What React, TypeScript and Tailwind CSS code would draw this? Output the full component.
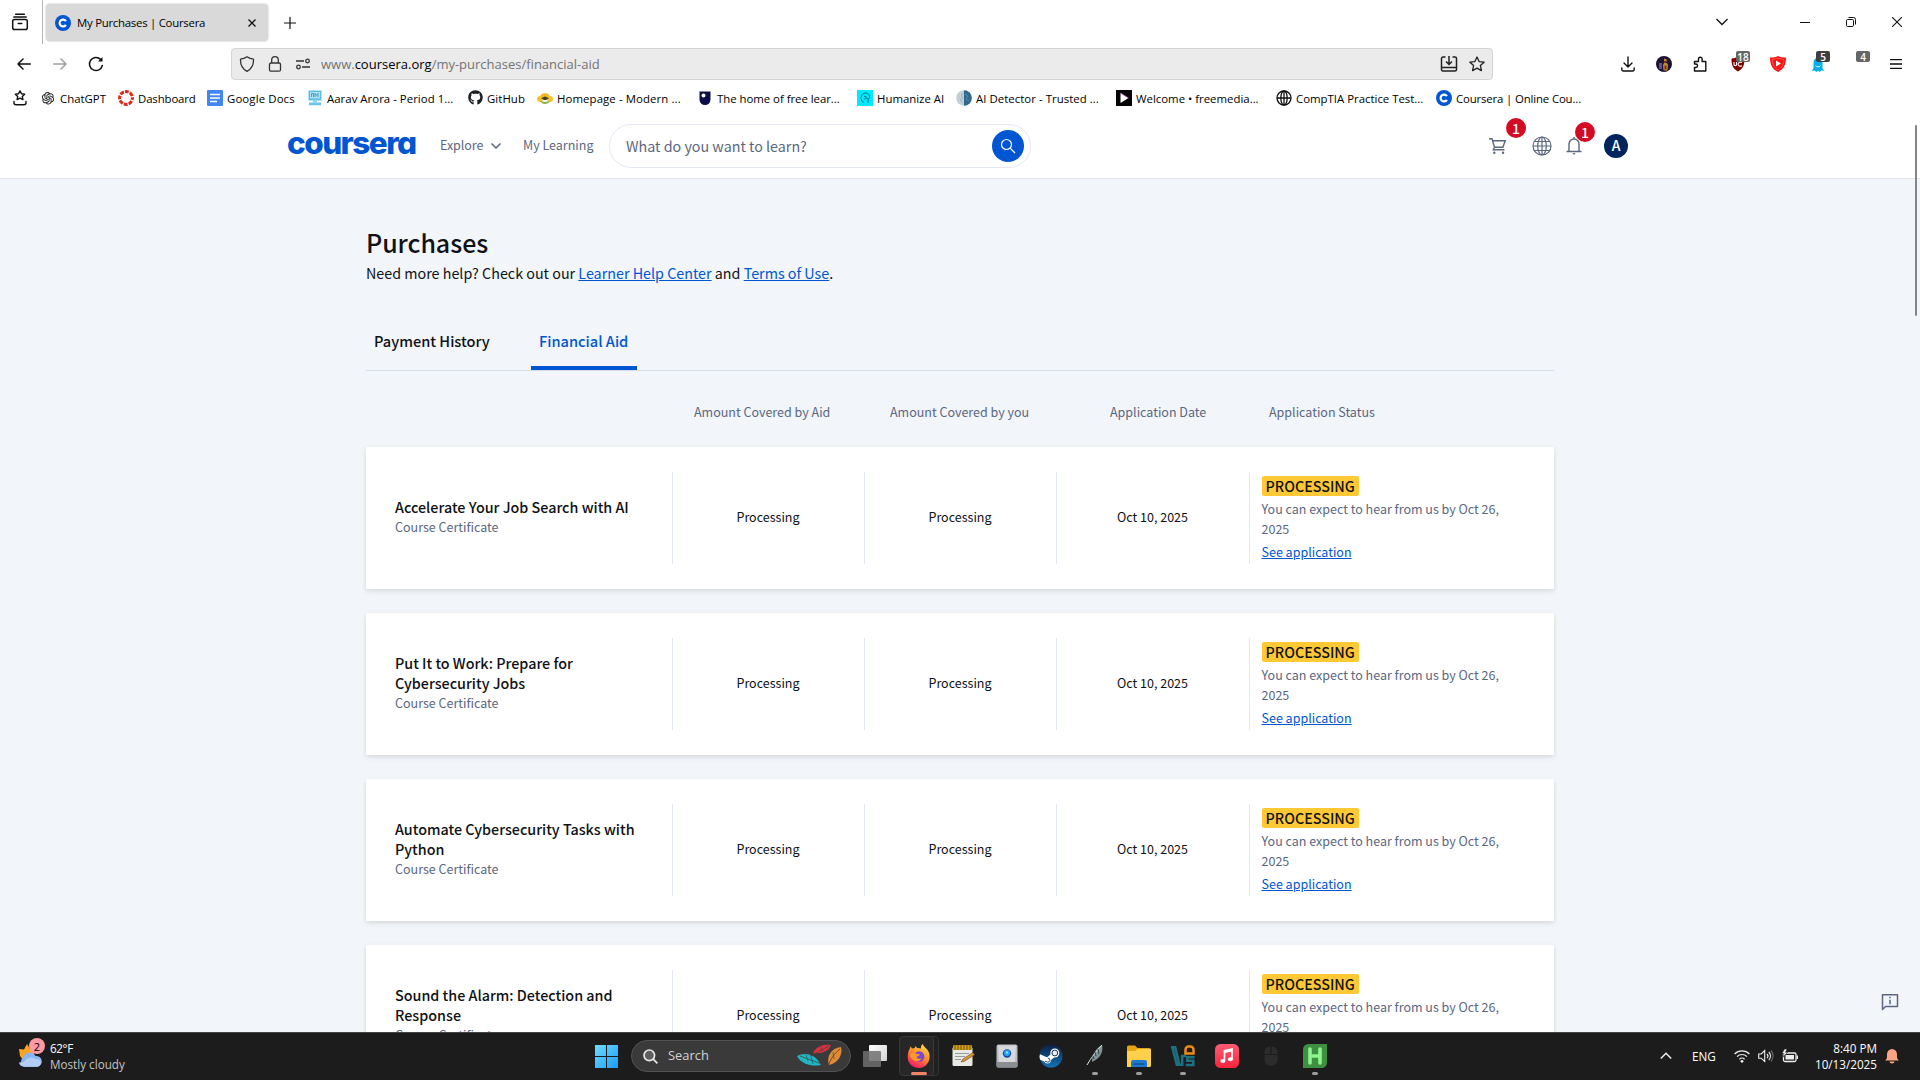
import type { ReactNode } from "react";
import { AiOutlineOpenAI } from "react-icons/ai";
import { FaGithub } from "react-icons/fa";

type IconProps = { className?: string };

const CourseraMark = ({ className = "size-4" }: IconProps) => (
  <svg viewBox="0 0 16 16" className={className}>
    <circle cx="8" cy="8" r="8" fill="#0056d2" />
    <path d="M10.9 9.8A3.4 3.4 0 1 1 10.9 6.2" fill="none" stroke="#fff" strokeWidth="2.2" />
  </svg>
);

const GlobeLine = () => (
  <svg viewBox="0 0 16 16" className="size-4" fill="none" stroke="#111" strokeWidth="1.3">
    <circle cx="8" cy="8" r="7" />
    <ellipse cx="8" cy="8" rx="3.2" ry="7" />
    <path d="M1 8h14M8 1v14" />
  </svg>
);

const bookmarks: { label: string; box: string; text: string; icon: ReactNode }[] = [
  { label: "ChatGPT", box: "w-[78px]", text: "", icon: <AiOutlineOpenAI className="size-4 text-[#222]" /> },
  {
    label: "Dashboard", box: "w-[89px]", text: "tracking-[-0.12px]",
    icon: (
      <svg viewBox="0 0 16 16" className="size-4">
        <circle cx="8" cy="8" r="6.4" fill="none" stroke="#e0291b" strokeWidth="3" strokeDasharray="3.9 1.13" strokeDashoffset="1.9" />
      </svg>
    ),
  },
  {
    label: "Google Docs", box: "w-[100px]", text: "tracking-[0.12px]",
    icon: (
      <svg viewBox="0 0 16 16" className="size-4">
        <rect width="16" height="16" rx="1" fill="#4285f4" />
        <path d="M3 4.5h10M3 8h10M3 11.5h7" stroke="#fff" strokeWidth="1.5" />
      </svg>
    ),
  },
  {
    label: "Aarav Arora - Period 1...", box: "w-[160px]", text: "tracking-[0.03px]",
    icon: (
      <svg viewBox="0 0 16 16" className="size-4">
        <rect x="1.5" y="0.5" width="13" height="10" fill="#5bbfe6" />
        <rect x="3" y="2" width="10" height="6.5" fill="#a8e0f5" />
        <path d="M4.5 7V3.5h2V7M8 7V3.5l1.5 2 1.5-2V7" stroke="#4a88aa" fill="none" strokeWidth="0.8" />
        <rect x="6" y="10.5" width="4" height="2" fill="#8fd0ec" />
        <rect x="2" y="12.5" width="12" height="2.8" fill="#6cc6ea" />
      </svg>
    ),
  },
  { label: "GitHub", box: "w-[70px]", text: "tracking-[0.06px]", icon: <FaGithub className="ml-px size-[15px] text-[#1b1f23]" /> },
  {
    label: "Homepage - Modern ...", box: "w-[160px]", text: "tracking-[0.1px]",
    icon: (
      <svg viewBox="0 0 16 16" className="size-4">
        <path d="M2 10A6 7 0 0 1 14 10z" fill="#f5b921" />
        <circle cx="3" cy="9" r="3" fill="#f2c230" />
        <circle cx="13" cy="9" r="3" fill="#f2c230" />
        <path d="M4 8.200l4-1.800 4 1.800-4 2z" fill="#3a3a35" />
        <path d="M3 11c2 4 8 4 10 0l-5 1z" fill="#8fae4a" />
      </svg>
    ),
  },
  {
    label: "The home of free lear...", box: "w-[160px]", text: "tracking-[-0.03px]",
    icon: (
      <svg viewBox="0 0 16 16" className="size-4">
        <path d="M2.5 1.5h11v8a5.5 5.5 0 0 1-11 0z" fill="#0b0f45" />
        <circle cx="6.5" cy="5.5" r="2" fill="#fff" />
      </svg>
    ),
  },
  {
    label: "Humanize AI", box: "w-[99px]", text: "",
    icon: (
      <svg viewBox="0 0 16 16" className="size-4">
        <rect width="16" height="16" fill="#00eaff" />
        <path d="M6 13v-2H4.5V8.800L3.500 8l1-1.500C4.700 4 6.500 3 8.500 3c2.500 0 4 1.800 4 3.800 0 2-1.500 2.700-1.500 4V13M7 6.500h2v2h2M7 9h1.500" fill="none" stroke="#0b6f86" strokeWidth="0.900" />
      </svg>
    ),
  },
  {
    label: "AI Detector - Trusted ...", box: "w-[160px]", text: "tracking-[0.04px]",
    icon: (
      <svg viewBox="0 0 16 16" className="size-4">
        <circle cx="8" cy="8" r="7.800" fill="#c3d0d8" />
        <path d="M8 .2a7.800 7.800 0 0 1 0 15.600z" fill="#2f6a8d" />
        <path d="M8 3l-3 2 2 3-3 2 3 3" stroke="#93a9b7" fill="none" strokeWidth="0.700" />
        <path d="M9 4l3 2-2 3 3 2" stroke="#5b93b3" fill="none" strokeWidth="0.800" />
      </svg>
    ),
  },
  {
    label: "Welcome • freemedia...", box: "w-[160px]", text: "",
    icon: (
      <svg viewBox="0 0 16 16" className="size-4">
        <rect width="16" height="16" fill="#050507" />
        <path d="M4.500 3l8 5-8 5z" fill="#fff" />
        <path d="M4.500 3l8 5" stroke="#d13ad1" strokeWidth="0.700" />
      </svg>
    ),
  },
  { label: "CompTIA Practice Test...", box: "w-[160px]", text: "", icon: <GlobeLine /> },
  { label: "Coursera | Online Cou...", box: "w-[160px]", text: "tracking-[-0.15px]", icon: <CourseraMark /> },
];

const Cell = ({ w, children }: { w: string; children?: ReactNode }) => (
  <div className={`relative flex h-full shrink-0 items-center justify-center ${w}`}>{children}</div>
);

const CountBadge = ({ children, tone = "bg-[#666]" }: { children: ReactNode; tone?: string }) => (
  <span className={`absolute right-[8px] top-[7px] flex h-[11px] min-w-[14px] items-center justify-center rounded-[2px] px-px text-[10px] font-semibold leading-none text-white ${tone}`}>
    {children}
  </span>
);

function TabStrip() {
  return (
    <div className="flex h-11 shrink-0 items-center">
      <div className="flex h-full w-[43px] items-center justify-center border-r border-[#b4b4b4]">
        <svg viewBox="0 0 18 18" className="mr-[3px] size-[18px]" fill="none" stroke="#111" strokeWidth="1.500" strokeLinecap="round">
          <rect x="1.700" y="6.500" width="14.600" height="10" rx="1.800" />
          <path d="M2.800 4h12.400M4.600 1.300h8.800M7.200 10.500h3.600" />
        </svg>
      </div>
      <div className="ml-[3px] mt-[1px] flex h-[37px] w-[222px] items-center rounded-[4px] bg-[#d9d9d9] pl-[9px] shadow-[0_0_2px_rgba(0,0,0,0.3)]">
        <CourseraMark />
        <span className="ml-[6px] w-[160px] whitespace-nowrap text-[11.400px] tracking-[-0.260px] text-black">My Purchases | Coursera</span>
        <svg viewBox="0 0 8 8" className="ml-[11px] size-2" stroke="#111" strokeWidth="1.300"><path d="M.5.5l7 7M7.500.5l-7 7" /></svg>
      </div>
      <svg viewBox="0 0 12 12" className="ml-4 mt-px size-3" stroke="#111" strokeWidth="1.200"><path d="M6 0v12M0 6h12" /></svg>
      <div className="ml-auto flex items-center">
        <svg viewBox="0 0 12 8" className="mr-[72px] h-2 w-3" fill="none" stroke="#111" strokeWidth="1.300"><path d="M.5 1l5.500 5.500L11.500 1" /></svg>
        <svg viewBox="0 0 10 10" className="mr-[36px] size-[10px]" stroke="#111"><path d="M0 5.500h10" /></svg>
        <svg viewBox="0 0 10 10" className="mr-[36px] size-[10px]" fill="none" stroke="#111"><rect x=".5" y="2.500" width="7" height="7" rx="1.200" /><path d="M2.500.5H7.500a2 2 0 0 1 2 2V7.500" /></svg>
        <svg viewBox="0 0 10 10" className="mr-[18px] size-[10px]" stroke="#111" strokeWidth="1.100"><path d="M0 0l10 10M10 0L0 10" /></svg>
      </div>
    </div>
  );
}

function NavBar() {
  return (
    <div className="flex h-10 shrink-0 items-center pl-[6px]">
      <Cell w="w-9"><svg viewBox="0 0 14 12" className="h-3 w-[14px]" fill="none" stroke="#111" strokeWidth="1.500" strokeLinecap="round" strokeLinejoin="round"><path d="M13.300 6H1M6 1L1 6l5 5" /></svg></Cell>
      <Cell w="w-9"><svg viewBox="0 0 14 12" className="h-3 w-[14px]" fill="none" stroke="#a0a0a0" strokeWidth="1.500" strokeLinecap="round" strokeLinejoin="round"><path d="M.7 6H13M8 1l5 5-5 5" /></svg></Cell>
      <Cell w="w-9">
        <svg viewBox="0 0 16 16" className="size-4" fill="none" stroke="#111" strokeWidth="1.500" strokeLinecap="round"><path d="M14.300 9.500A6.500 6.500 0 1 1 12.600 3.400" /><path d="M14.500 1v4.500H10z" fill="#111" stroke="none" /></svg>
      </Cell>
      <div className="ml-[117px] flex h-8 w-[1262px] items-center rounded-[4px] border border-[#d4d4d4] bg-[#ebebeb]">
        <div className="flex w-[89px] items-center pl-[7px]">
          <svg viewBox="0 0 16 16" className="size-4" fill="none" stroke="#333" strokeWidth="1.300" strokeLinejoin="round"><path d="M8 .8c2 1.500 4 2.200 6.500 2.400C14.700 8.500 12.500 13 8 15.300 3.500 13 1.300 8.500 1.500 3.200 4 3 6 2.300 8 .8z" /></svg>
          <svg viewBox="0 0 16 16" className="ml-3 size-4" fill="none" stroke="#333" strokeWidth="1.300"><rect x="2.500" y="7" width="11" height="8.200" rx="1.500" /><path d="M4.700 7V4a3.300 3.300 0 0 1 6.600 0v3" /></svg>
          <svg viewBox="0 0 16 16" className="ml-3 size-4" fill="none" stroke="#333" strokeWidth="1.300"><path d="M1 5h8M7 11h8" /><circle cx="12.500" cy="5" r="1.800" /><circle cx="3.500" cy="11" r="1.800" /></svg>
        </div>
        <div className="whitespace-nowrap pt-[2px] text-[13px] text-[#737373]">www.<span className="text-black">coursera.org</span>/my-purchases/financial-aid</div>
        <svg viewBox="0 0 18 16" className="ml-auto h-4 w-[18px]" fill="none" stroke="#222" strokeWidth="1.500"><path d="M5.500 1H3a1.500 1.500 0 0 0-1.500 1.500v11A1.500 1.500 0 0 0 3 15h12a1.500 1.500 0 0 0 1.500-1.500v-11A1.500 1.500 0 0 0 15 1h-2.500M1.500 11.500h15M9 0v8M6 5.500l3 3 3-3" /></svg>
        <svg viewBox="0 0 16 16" className="ml-[11px] mr-[7px] size-4" fill="none" stroke="#222" strokeWidth="1.300" strokeLinejoin="round"><path d="M8 1l2.100 4.600 5 .6-3.700 3.400 1 5L8 12.100 3.600 14.600l1-5L.9 6.200l5-.6z" /></svg>
      </div>
      <div className="ml-[117px] flex h-full items-center">
        <Cell w="w-9"><svg viewBox="0 0 14 16" className="h-4 w-[14px]" fill="none" stroke="#111" strokeWidth="1.400" strokeLinecap="round" strokeLinejoin="round"><path d="M7 1v9.500M3 7l4 4 4-4M.8 12v1.500A1.500 1.500 0 0 0 2.300 15h9.400a1.500 1.500 0 0 0 1.500-1.500V12" /></svg></Cell>
        <Cell w="w-9">
          <svg viewBox="0 0 16 16" className="size-4"><circle cx="8" cy="8" r="8" fill="#1c1436" /><path d="M3 7h3v6H3z" fill="#6a4a8a" /><path d="M8 2.500l3 1-1 3 2 2-.5 6h-4L7 9l1-2z" fill="#c58a2c" /><path d="M8 5h2v2H8zM8.500 9.500h2v4h-2z" fill="#7a2e12" /></svg>
        </Cell>
        <Cell w="w-9"><svg viewBox="0 0 16 16" className="size-4" fill="none" stroke="#111" strokeWidth="1.400" strokeLinejoin="round"><path d="M2.500 15V11.500h1.300a1.700 1.700 0 0 0 0-3.500H2.500V5.500h4V3a1.800 1.800 0 0 1 3.600 0v2.500h3.700V15z" /></svg></Cell>
        <Cell w="w-10">
          <svg viewBox="0 0 16 16" className="size-4"><path d="M8 .5c2 1.300 4 1.800 6.500 2 0 6-1 10-6.500 13C2.500 12.500 1.500 8.500 1.500 2.500 4 2.300 6 1.800 8 .5z" fill="#800000" /><path d="M4 6v2.500c0 1.500 2.500 1.500 2.500 0V6M12 6.500c-2-1-4 .3-4 1.700s2 2.600 4 1.500" fill="none" stroke="#fff" strokeWidth="1.100" /></svg>
          <CountBadge>18</CountBadge>
        </Cell>
        <Cell w="w-10"><svg viewBox="0 0 16 16" className="size-4"><path d="M8 0c2 1 5 1.500 8 1.600C16 9 13.500 13.500 8 16 2.500 13.500 0 9 0 1.600 3 1.500 6 1 8 0z" fill="#ff1212" /><path d="M8 2c2 .8 3.500 1.100 5.800 1.300C13.600 9 11.500 12 8 13.800 4.500 12 2.400 9 2.200 3.300 4.500 3.100 6 2.800 8 2z" fill="none" stroke="#ff7a7a" strokeWidth=".6" /><path d="M6 4.500l5 3-5 3z" fill="#fff" /></svg></Cell>
        <Cell w="w-10">
          <svg viewBox="0 0 16 16" className="size-4"><path d="M3.500 7a4.500 5.500 0 0 1 9 0v5l1.500 3-2.500-.6L9.500 16 8 14.500 6.500 16l-2-1.600L2 15l1.500-3z" fill="#00aef0" /><path d="M5.500 9.500c1 1.800 4 1.800 5 0" stroke="#fff" fill="none" strokeWidth=".9" /></svg>
          <CountBadge tone="bg-[#3f3f3f]">5</CountBadge>
        </Cell>
        <Cell w="w-10"><CountBadge>4</CountBadge></Cell>
        <Cell w="w-9"><svg viewBox="0 0 12 10" className="h-[10px] w-3" stroke="#111" strokeWidth="1.300"><path d="M0 .7h12M0 5h12M0 9.300h12" /></svg></Cell>
      </div>
    </div>
  );
}

function BookmarkBar() {
  return (
    <div className="flex h-7 shrink-0 items-center pl-3">
      <svg viewBox="0 0 16 16" className="mr-3 size-4" fill="none" stroke="#111" strokeWidth="1.400" strokeLinejoin="round" strokeLinecap="round"><path d="M8 .8l1.500 3 3.200.4-2.400 2.200.6 3.200L8 8.100 5.100 9.600l.6-3.200L3.300 4.200l3.200-.4zM2 11.500v1.300A2 2 0 0 0 4 14.800h8a2 2 0 0 0 2-2v-1.300" /></svg>
      {bookmarks.map((b) => (
        <div key={b.label} className={`flex shrink-0 items-center gap-1 ${b.box}`}>
          {b.icon}
          <span className={`whitespace-nowrap pt-px text-[11.400px] text-black ${b.text}`}>{b.label}</span>
        </div>
      ))}
    </div>
  );
}

function SiteHeader() {
  return (
    <header className="flex h-[67px] shrink-0 items-center border-b border-[#e1e4e8] bg-white pl-[287px] pt-px font-['Noto_Sans_CJK_SC',sans-serif] text-[12.500px] text-[#5b6780]">
      <div className="flex h-[34px] w-[153px] items-center pb-[5px] font-['Inter',sans-serif] text-[31.500px] font-extrabold leading-none tracking-[-1.550px] text-[#0056d2] [font-feature-settings:'cv11']">coursera</div>
      <span className="w-[51px] tracking-[-0.060px]">Explore</span>
      <svg viewBox="0 0 10 6" className="h-[6px] w-[10px]" fill="none" stroke="#5b6780" strokeWidth="1.500"><path d="M.5.5L5 5 9.500.5" /></svg>
      <span className="ml-[22px] w-[86px] whitespace-nowrap">My Learning</span>
      <div className="flex h-11 w-[422px] items-center justify-between rounded-full border border-[#e3e8f4] pl-4 pr-[6px]">
        <span className="text-[14.300px]">What do you want to learn?</span>
        <div className="flex size-8 items-center justify-center rounded-full bg-[#0056d2]">
          <svg viewBox="0 0 16 16" className="size-4" fill="none" stroke="#fff" strokeWidth="1.200"><circle cx="6.500" cy="6.500" r="5" /><path d="M10.200 10.200l4.800 4.800" /></svg>
        </div>
      </div>
      <div className="relative ml-[458px]">
        <svg viewBox="0 0 18 18" className="size-[18px]" fill="none" stroke="#5b6780" strokeWidth="1.400"><path d="M0 1.700h3l2.500 8.500-1.200 2.600h11.200M3.600 3.700h12.600l-2.300 6.500H5.500" /><circle cx="5.300" cy="15.700" r="1.200" fill="#5b6780" stroke="none" /><circle cx="14" cy="15.700" r="1.200" fill="#5b6780" stroke="none" /></svg>
        <span className="absolute -top-[19px] left-[17px] flex size-5 items-center justify-center rounded-full bg-[#d30b25] text-[14px] font-medium leading-none text-white">1</span>
      </div>
      <svg viewBox="0 0 20 20" className="ml-[25px] size-5" fill="none" stroke="#5b6780" strokeWidth="1.200"><circle cx="10" cy="10" r="9" /><ellipse cx="10" cy="10" rx="4.300" ry="9" /><path d="M10 1v18M1 10h18M2.300 5.500h15.400M2.300 14.500h15.400" /></svg>
      <div className="relative ml-[14px]">
        <svg viewBox="0 0 16 18" className="h-[18px] w-4" fill="none" stroke="#5b6780" strokeWidth="1.400"><path d="M.5 14.500h15M3 14.500V7a5 5 0 0 1 10 0v7.500M8 2V0" /><path d="M6.500 16h3L8 18z" fill="#5b6780" stroke="none" /></svg>
        <span className="absolute -top-[15px] left-[9px] flex size-5 items-center justify-center rounded-full bg-[#d30b25] text-[14px] font-medium leading-none text-white">1</span>
      </div>
      <div className="ml-[22px] flex size-6 items-center justify-center rounded-full bg-[#00255d] text-[14px] font-medium text-white">A</div>
    </header>
  );
}

const courses: { id: number; title: ReactNode }[] = [
  { id: 1, title: "Accelerate Your Job Search with AI" },
  { id: 2, title: <>Put It to Work: Prepare for<br />Cybersecurity Jobs</> },
  { id: 3, title: <>Automate Cybersecurity Tasks with<br />Python</> },
  { id: 4, title: <>Sound the Alarm: Detection and<br />Response</> },
];

const Value = ({ w, children }: { w: string; children: ReactNode }) => (
  <div className={`flex shrink-0 items-center justify-center border-l border-[#e3e8f4] pb-[2px] pr-px text-[12.500px] leading-5 text-[#0f1114] ${w}`}>{children}</div>
);

function AidCard({ title }: { title: ReactNode }) {
  return (
    <article className="mb-6 flex h-[142px] shrink-0 rounded-[1px] bg-white py-[25px] shadow-[0_2px_5px_rgba(0,0,0,0.12)]">
      <div className="flex w-[306px] shrink-0 flex-col justify-center pb-1 pl-[29px]">
        <h2 className="whitespace-nowrap text-[14.330px] font-medium leading-5 text-[#0f1114]">{title}</h2>
        <p className="text-[12.500px] leading-[19px] text-[#5b6780]">Course Certificate</p>
      </div>
      <Value w="w-[192px]">Processing</Value>
      <Value w="w-[192px]">Processing</Value>
      <Value w="w-[193px]">Oct 10, 2025</Value>
      <div className="flex flex-1 flex-col items-start border-l border-[#e3e8f4] pl-[11.500px] pt-1 text-[12.500px] leading-5">
        <span className="h-5 rounded-[2px] bg-[#ffc936] px-1 text-[14.300px] font-medium text-[#0f1114]">PROCESSING</span>
        <p className="mt-[3px] whitespace-nowrap text-[#5b6780]">You can expect to hear from us by Oct 26,<br />2025</p>
        <a className="mt-[3px] text-[#0056d2] underline">See application</a>
      </div>
    </article>
  );
}

function Purchases() {
  return (
    <main className="relative flex min-h-0 flex-1 flex-col overflow-hidden bg-[#f2f5fa] pl-[366px] pr-[366px] font-['Noto_Sans_CJK_SC',sans-serif]">
      <h1 className="mt-[45px] text-[25px] font-medium leading-9 tracking-[-0.050px] text-[#0f1114]">Purchases</h1>
      <p className="mt-px text-[14.320px] leading-6 text-[#0f1114]">
        Need more help? Check out our <a className="text-[#0056d2] underline">Learner Help Center</a> and <a className="text-[#0056d2] underline">Terms of Use</a>.
      </p>
      <div className="mt-[35px] flex h-[51px] shrink-0 border-b border-[#d5dcea] text-[14.600px] font-medium leading-6">
        <div className="w-[165px] pl-2 pt-[9px] text-[#0f1114]">Payment History</div>
        <div className="h-[50px] w-[106px] rounded-t-[1px] border-b-4 border-[#0056d2] pl-2 pt-[9px] text-[#0056d2]">Financial Aid</div>
      </div>
      <div className="mt-[31px] flex h-5 shrink-0 whitespace-nowrap pl-[328px] text-[12.500px] leading-5 text-[#5b6780]">
        <span className="w-[196px]">Amount Covered by Aid</span>
        <span className="w-[220px]">Amount Covered by you</span>
        <span className="w-[159px]">Application Date</span>
        <span>Application Status</span>
      </div>
      <div className="mt-[25px] flex flex-col">
        {courses.map((c) => <AidCard key={c.id} title={c.title} />)}
      </div>
      <svg viewBox="0 0 18 18" className="absolute bottom-[21px] right-[21px] size-[18px]" fill="none" stroke="#5b6780" strokeWidth="1.500"><path d="M1.500 16.500V1.700h15v11.800H4.500z" strokeLinejoin="round" /><path d="M9 6.700v4.600M9 3.700v1.500" /></svg>
    </main>
  );
}

const Dot = () => <span className="absolute bottom-[4px] h-[3px] w-[6px] rounded-full bg-[#9d9d9d]" />;

function Taskbar() {
  return (
    <footer className="flex h-12 shrink-0 items-center border-t border-[#444] bg-[#1c1c1c] pb-px text-[11.700px] text-white">
      <div className="flex w-[584px] items-center pl-[17px]">
        <div className="relative">
          <svg viewBox="0 0 26 26" className="size-[26px]">
            <path d="M2 6l5 .5L10 1l3 5 6 1-3 5 1 5H6l-3-4z" fill="#f7a520" />
            <path d="M7 24a6 6 0 0 1-.5-10 6.500 6.500 0 0 1 12-1A5.500 5.500 0 0 1 20 24z" fill="#8ab4f2" />
            <path d="M7 19a8 8 0 0 1 12-3 5 5 0 0 1 5 3c0 3-2 4.500-4 4.500H7a5 5 0 0 1-5-4z" fill="#b3cdf8" />
          </svg>
          <span className="absolute -top-[5px] left-[12px] flex size-4 items-center justify-center rounded-full bg-[#ff99a4] text-[11px] leading-none text-black">2</span>
        </div>
        <div className="ml-[7px] pb-px leading-4">
          <div className="tracking-[-0.400px]">62°F</div>
          <div className="text-[#c4c4c4]">Mostly cloudy</div>
        </div>
      </div>
      <Cell w="w-11">
        <svg viewBox="0 0 23 23" className="size-[23px]">
          <defs><linearGradient id="win" x1="0" y1="0" x2="1" y2="1"><stop stopColor="#6fdcff" /><stop offset="1" stopColor="#1a9cf8" /></linearGradient></defs>
          <path d="M0 0h11v11H0zM12 0h11v11H12zM0 12h11v11H0zM12 12h11v11H12z" fill="url(#win)" />
        </svg>
      </Cell>
      <div className="ml-[3px] flex h-8 w-[220px] items-center rounded-full border border-[#525252] bg-[#3a3a3a] pl-[11px] text-[12.900px] text-[#d2d2d2]">
        <svg viewBox="0 0 15 15" className="size-[15px]" fill="#5e5e5e" stroke="#e6e6e6" strokeWidth="1.700"><circle cx="6.300" cy="6.300" r="5.300" /><path d="M10.200 10.200l4.200 4.200" /></svg>
        <span className="ml-[10px]">Search</span>
        <svg viewBox="0 0 46 24" className="ml-auto mr-[7px] h-6 w-[46px]">
          <path d="M16 9c3-6 9-9 18-8-2 6-9 9-18 8z" fill="#d8323f" />
          <path d="M0 12c7-4 18-3 24 9-9 2-20-1-24-9z" fill="#1fb5c4" />
          <path d="M32 21c-3-8 2-17 12-18 2 8-3 16-12 18z" fill="#e08a35" />
          <path d="M3 12l27 10M31 23C33 15 38 9 43 5M13 12L32 2" stroke="#513f35" strokeWidth=".8" fill="none" />
          <path d="M9 11l2 6M14 12l2 8M36 8l1 7M23 3l3 4" stroke="#123c48" strokeWidth=".5" />
        </svg>
      </div>
      <div className="ml-[2px] flex h-full">
        <Cell w="w-11">
          <svg viewBox="0 0 24 24" className="size-6"><defs><linearGradient id="tv" x1="0" y1="0" x2="1" y2="1"><stop stopColor="#fff" /><stop offset="1" stopColor="#d2d2d2" /></linearGradient></defs><rect x="6" y="1" width="18" height="16" rx="1" fill="url(#tv)" /><rect x="0" y="7" width="18" height="16" rx="1" fill="#707070" fillOpacity=".85" /></svg>
        </Cell>
        <Cell w="w-11">
          <span className="absolute left-[5px] top-[3px] h-10 w-[37px] rounded-[4px] border border-[#333] bg-[#202020]" />
          <span className="absolute left-[2px] top-[3px] h-10 w-[35px] rounded-[4px] border border-[#383838] bg-[#272727]" />
          <svg viewBox="0 0 24 24" className="relative size-6">
            <defs><linearGradient id="ff" x1=".8" y1="0" x2=".3" y2="1"><stop stopColor="#ffe24a" /><stop offset=".45" stopColor="#ff9128" /><stop offset="1" stopColor="#f5156c" /></linearGradient></defs>
            <path d="M2.500 5l1-2.500 1.800 2L8 4l-.3-2L10.500 4l3.500.5c-.5-2 .5-3.500 2-4.500 0 3 5 4.500 6.300 9.500C24 17 19 24 12 24S.5 19 .7 12.500C.7 9.500 1.500 7 2.500 5z" fill="url(#ff)" />
            <circle cx="12.200" cy="12.500" r="5.200" fill="#7a46d6" />
            <path d="M3 10c3-1.500 5-1 7 0l3 .3c-.5 1.700-3 1.700-3.500 3 .8 1.700 3.300 2 5 1-1 3-5 4-8 2S3 12 3 10z" fill="#ff9a2c" />
          </svg>
          <span className="absolute bottom-[4px] left-[14px] h-[3px] w-4 rounded-full bg-[#f3826a]" />
        </Cell>
        <Cell w="w-11">
          <svg viewBox="0 0 24 24" className="size-6"><rect x="1.500" y="3" width="20" height="19" rx="1.500" fill="#e9e9e4" /><rect x="2" y="1" width="19" height="5" rx="1" fill="#cf9d1b" /><path d="M4 1v5M7 1v5M10 1v5M13 1v5M16 1v5M19 1v5" stroke="#5c430c" strokeWidth=".8" /><path d="M4 9.500h14M4 12.500h10M4 15.500h6" stroke="#999" strokeWidth="1" /><path d="M10 18l2-3 10-6.500 1.500 2.300-10 6.400z" fill="#d9943a" stroke="#6d4516" strokeWidth=".6" /></svg>
        </Cell>
        <Cell w="w-11">
          <svg viewBox="0 0 24 24" className="size-6"><rect x="1.500" y=".5" width="21" height="23" rx="2" fill="#b9bcc2" /><path d="M3 1.500h18l-1 17H4z" fill="#d6d8dc" /><path d="M1.500 18h21v4a1.500 1.500 0 0 1-1.500 1.500H3A1.500 1.500 0 0 1 1.500 22z" fill="#8a8d92" /><circle cx="12" cy="9.500" r="4.200" fill="#164c9c" /><circle cx="12" cy="9" r="3" fill="#25a6ff" /><circle cx="12" cy="8.400" r="1" fill="#b9e8ff" /></svg>
        </Cell>
        <Cell w="w-11">
          <svg viewBox="0 0 24 24" className="size-6">
            <defs>
              <linearGradient id="st" x1="0" y1="0" x2="0" y2="1"><stop stopColor="#0c1f45" /><stop offset="1" stopColor="#1573b4" /></linearGradient>
              <clipPath id="disc"><circle cx="12" cy="12" r="11.500" /></clipPath>
            </defs>
            <circle cx="12" cy="12" r="11.500" fill="url(#st)" />
            <g clipPath="url(#disc)">
              <path d="M0 12.500l8.500 3.700" stroke="#fff" strokeWidth="5" />
              <path d="M8.500 16l7-6" stroke="#fff" strokeWidth="4.500" />
            </g>
            <circle cx="8.600" cy="16.200" r="3.200" fill="#fff" />
            <path d="M6 17.200l2.200.8a2 2 0 1 0 .6-3.900" stroke="#1a4f83" strokeWidth="1" fill="none" />
            <circle cx="15.800" cy="9" r="4.500" fill="#fff" />
            <circle cx="15.800" cy="9" r="2.900" fill="#e8eef4" stroke="#16345f" strokeWidth="1" />
          </svg>
        </Cell>
        <Cell w="w-11">
          <svg viewBox="0 0 24 24" className="size-6"><path d="M19 1c1.500 6-1 13-10 17 0-7 4-14 10-17z" fill="#7f9496" /><path d="M19 1C13 7 8 14 4 21" stroke="#d9e4e2" strokeWidth="1" fill="none" /><path d="M12 8l1 4M15 5l1 5M10 12l1 3" stroke="#2a3739" strokeWidth=".9" /></svg>
          <Dot />
        </Cell>
        <Cell w="w-11">
          <svg viewBox="0 0 24 24" className="size-6"><path d="M0 3a1.500 1.500 0 0 1 1.500-1.500H8L10.500 4H22a2 2 0 0 1 2 2v15H0z" fill="#e6a612" /><path d="M0 7h8l2.500-2H24v16.500a1.500 1.500 0 0 1-1.500 1.500H0z" fill="#ffd04a" /><path d="M4 23v-5a2 2 0 0 1 2-2h12a2 2 0 0 1 2 2v5z" fill="#1f78cf" /><path d="M6.500 20h11" stroke="#0f529c" strokeWidth="1.500" /></svg>
          <Dot />
        </Cell>
        <Cell w="w-11">
          <svg viewBox="0 0 24 24" className="size-6" fill="none" strokeWidth="2.500"><path d="M0 3.200h4.200l4 16.500M1.300 3.200l4.500 17.500h5.400V12h4" stroke="#1b7183" /><path d="M23.500 13.300h-7.200v3.500h6v4.200h-7.500" stroke="#1b7183" /><path d="M14.500 9.500V5.500a3 3 0 0 1 3-3h2a3 3 0 0 1 3 3v4z" stroke="#ee8a16" /></svg>
          <Dot />
        </Cell>
        <Cell w="w-11">
          <svg viewBox="0 0 24 24" className="size-6"><defs><linearGradient id="mu" x1="0" y1="0" x2="0" y2="1"><stop stopColor="#fb5c74" /><stop offset="1" stopColor="#fa233b" /></linearGradient></defs><rect width="24" height="24" rx="5.500" fill="url(#mu)" /><path d="M9.500 16.500V6.700L17 5v9.700" fill="none" stroke="#fff" strokeWidth="1.700" /><path d="M9.500 6.500L17 5v2.500L9.500 9z" fill="#fff" /><ellipse cx="7.800" cy="17" rx="2.500" ry="2" fill="#fff" /><ellipse cx="15.400" cy="15.200" rx="2.500" ry="2" fill="#fff" /></svg>
        </Cell>
        <Cell w="w-11">
          <svg viewBox="0 0 14 20" className="h-5 w-[14px]"><rect x=".5" y=".5" width="13" height="19" rx="5.500" fill="#2c2c2c" /><path d="M0 8.500h14M7 0v8" stroke="#1c1c1c" strokeWidth="1.200" /></svg>
        </Cell>
        <Cell w="w-11">
          <svg viewBox="0 0 24 24" className="size-6"><path d="M5.500 0H24v18.500a5.500 5.500 0 0 1-5.500 5.500H0V5.500A5.500 5.500 0 0 1 5.500 0z" fill="#3f9142" /><path d="M7 5v14M17 5v14M7 12h10" stroke="#8df58b" strokeWidth="3.600" strokeLinecap="round" /></svg>
          <Dot />
        </Cell>
      </div>
      <div className="ml-auto flex items-center pr-[21px]">
        <svg viewBox="0 0 12 8" className="mr-[20px] h-2 w-3" fill="none" stroke="#eee" strokeWidth="1.500"><path d="M.8 6.500L6 1.300l5.200 5.200" /></svg>
        <span className="w-[42px] pt-px">ENG</span>
        <svg viewBox="0 0 16 14" className="h-[14px] w-4" fill="none" stroke="#eee" strokeWidth="1.200"><path d="M.6 5a10.500 10.500 0 0 1 14.800 0M3 7.600a7 7 0 0 1 10 0M5.400 10.200a3.700 3.700 0 0 1 5.200 0" /><circle cx="8" cy="12.300" r="1.400" fill="#eee" stroke="none" /></svg>
        <svg viewBox="0 0 16 14" className="ml-2 h-[14px] w-4" fill="none" stroke="#eee" strokeWidth="1.100"><path d="M.7 5v4.200h2.500L6.700 12.500v-11L3.200 5zM9 5a3 3 0 0 1 0 4.200M10.800 3a5.500 5.500 0 0 1 0 8" /><path d="M12.900 1.500a8 8 0 0 1 0 11" stroke="#6a6a6a" /></svg>
        <svg viewBox="0 0 18 14" className="ml-[7px] h-[14px] w-[18px]"><rect x="2.500" y="4" width="12.500" height="8.500" rx="1.500" fill="none" stroke="#eee" strokeWidth="1.300" /><rect x="4.500" y="6" width="8.500" height="4.500" fill="#eee" /><path d="M15.600 6.500h1.400v3.500h-1.400z" fill="#eee" /><path d="M3.500 0L1 4.500h2L2 8l4.500-4.500h-2L6 0z" fill="#eee" stroke="#1c1c1c" strokeWidth=".5" /></svg>
        <div className="w-[78px] pb-px text-right leading-4">
          <div>8:40 PM</div>
          <div>10/13/2025</div>
        </div>
        <svg viewBox="0 0 14 16" className="ml-[8px] h-4 w-[14px]"><path d="M2 6.500a5 5.500 0 0 1 10 0V10l1.700 2.500H.3L2 10zM4.500 13.500h5a2.500 2 0 0 1-5 0z" fill="#fba585" /></svg>
      </div>
    </footer>
  );
}

export default function App() {
  return (
    <div className="relative flex h-[1080px] w-[1920px] flex-col overflow-hidden bg-white font-['Open_Sans',sans-serif]">
      <TabStrip />
      <NavBar />
      <BookmarkBar />
      <SiteHeader />
      <Purchases />
      <Taskbar />
      <div className="absolute right-[3px] top-[125px] h-[191px] w-[2px] rounded-full bg-[#858585]" />
    </div>
  );
}
